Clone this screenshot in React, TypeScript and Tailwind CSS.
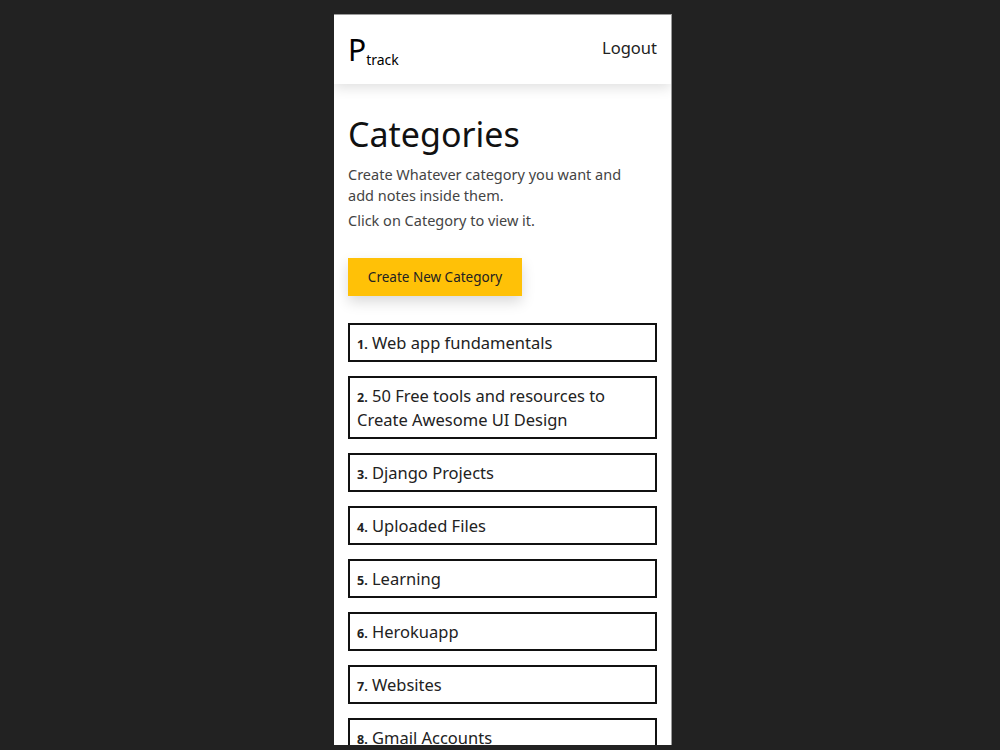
import React from 'react';

const categories = [
  'Web app fundamentals',
  '50 Free tools and resources to Create Awesome UI Design',
  'Django Projects',
  'Uploaded Files',
  'Learning',
  'Herokuapp',
  'Websites',
  'Gmail Accounts',
  'Portfolio',
];

export default function App() {
  return (
    <div
      className="w-[1000px] h-[750px] bg-[#222222] overflow-hidden flex justify-center"
      style={{ fontFamily: '"Noto Sans", Lato, sans-serif' }}
    >
      <div className="ml-[6px] mt-[14px] w-[338px] h-[731px] bg-white border-t border-r border-[#9a9a9a] overflow-hidden flex flex-col">
        {/* Navbar */}
        <header className="h-[69px] shrink-0 flex items-center justify-between px-[14px] shadow-[0_4px_12px_rgba(0,0,0,0.12)] relative z-10">
          <div className="flex items-end text-black leading-none">
            <span className="text-[30px]">P</span>
            <span className="text-[14px] -mb-[2px]">track</span>
          </div>
          <span className="text-[16.5px] text-[#222] -mt-[2px]">Logout</span>
        </header>

        <main className="px-[14px] pt-[30px] flex flex-col">
          <h1 className="text-[34px] leading-[40px] text-[#111]">Categories</h1>
          <p className="mt-[10px] text-[14.5px] leading-[21px] text-[#444] pr-[14px]">
            Create Whatever category you want and add notes inside them.
          </p>
          <p className="mt-[4px] text-[14.5px] leading-[21px] text-[#444]">Click on Category to view it.</p>

          <button className="mt-[27px] self-start w-[174px] h-[38px] bg-[#ffc107] text-[13.5px] text-[#222] shadow-[0_6px_14px_rgba(0,0,0,0.15)]">
            Create New Category
          </button>

          <ul className="mt-[27px] flex flex-col gap-[14px]">
            {categories.map((c, i) => (
              <li
                key={c}
                className="border-2 border-[#111] px-[7px] pt-[6px] pb-[5px] text-[16.5px] leading-[24px] text-[#222]"
              >
                <span className="text-[12.5px] font-bold leading-none">{i + 1}.</span> {c}
              </li>
            ))}
          </ul>
        </main>
      </div>
    </div>
  );
}
